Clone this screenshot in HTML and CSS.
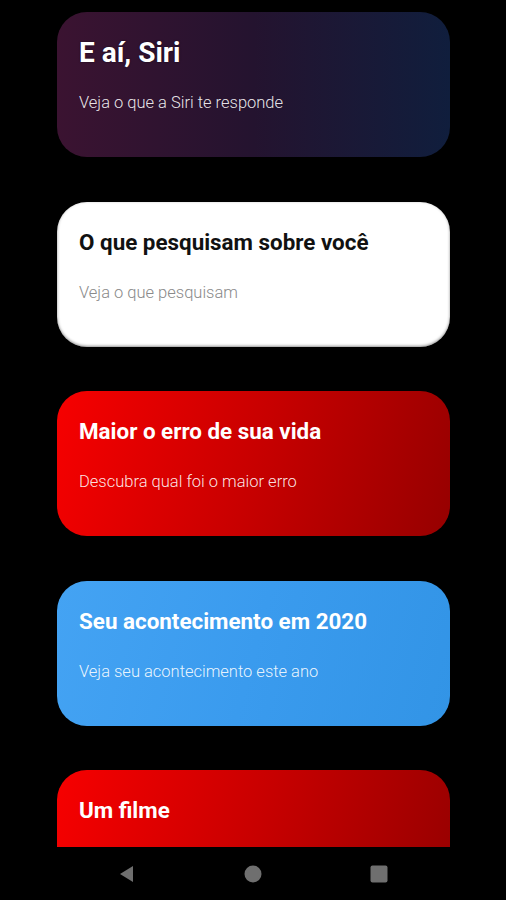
FILE: index.html
```html
<!DOCTYPE html>
<html lang="pt-BR">
<head>
  <meta charset="UTF-8">
  <meta name="viewport" content="width=device-width, initial-scale=1.0">
  <title>Perguntas</title>
  <link rel="stylesheet" href="styles.css">
</head>
<body>
  <!-- Card list -->
  <div class="card-list">
    <div class="card card-siri card-hero">
      <div class="card-title">E aí, Siri</div>
      <div class="card-text">Veja o que a Siri te responde</div>
    </div>

    <div class="card card-white">
      <div class="card-title">O que pesquisam sobre você</div>
      <div class="card-text">Veja o que pesquisam</div>
    </div>

    <div class="card card-red">
      <div class="card-title">Maior o erro de sua vida</div>
      <div class="card-text">Descubra qual foi o maior erro</div>
    </div>

    <div class="card card-blue">
      <div class="card-title">Seu acontecimento em 2020</div>
      <div class="card-text">Veja seu acontecimento este ano</div>
    </div>

    <div class="card card-red">
      <div class="card-title">Um filme</div>
      <div class="card-text">Descubra qual filme combina com você</div>
    </div>
  </div>

  <!-- Android navigation bar -->
  <div class="nav-bar">
    <svg class="nav-icon" viewBox="0 0 18 18"><path d="M15 1 L15 17 L2 9 Z" /></svg>
    <svg class="nav-icon" viewBox="0 0 18 18"><circle cx="9" cy="9" r="8.5" /></svg>
    <svg class="nav-icon" viewBox="0 0 18 18"><rect x="0.5" y="0.5" width="17" height="17" rx="2" /></svg>
  </div>
</body>
</html>
```

FILE: styles.css
```css
/* General body styling */
body {
  background-color: black;
  margin: 0;
  height: 900px;
  overflow: hidden;
  font-family: 'Roboto', 'Liberation Sans', sans-serif;
  color: white;
}

/* Card list */
.card-list {
  display: flex;
  flex-direction: column;
  gap: 44.5px;
  padding: 12px 0 0 57px;
  width: 393px;
}

.card {
  height: 145px;
  box-sizing: border-box;
  border-radius: 30px;
  padding: 27px 22px 44px;
  display: flex;
  flex-direction: column;
  justify-content: space-between;
}

.card-title {
  font-size: 22.4px;
  line-height: 26px;
  font-weight: bold;
}

.card-text {
  font-size: 16.5px;
  line-height: 20px;
  font-weight: 300;
  color: rgba(255, 255, 255, 0.9);
}

/* Big first card */
.card-hero {
  padding-top: 25px;
}

.card-hero .card-title {
  font-size: 28px;
  line-height: 32px;
  text-shadow: 0 0 2px rgba(0, 0, 0, 0.6);
}

.card-siri {
  background: linear-gradient(90deg, #3b1331 0%, #24132f 50%, #101e3d 100%);
}

.card-white {
  background-color: white;
  color: #111;
  box-shadow: inset 0 -1px 3px rgba(0, 0, 0, 0.45);
}

.card-white .card-text {
  color: #8a8a8a;
}

.card-red {
  background: linear-gradient(105deg, #f70000 0%, #c80000 50%, #960000 100%);
}

.card-blue {
  background: linear-gradient(105deg, #44a3f3 0%, #3a9bee 50%, #3294e6 100%);
}

/* Navigation bar */
.nav-bar {
  position: fixed;
  left: 0;
  bottom: 0;
  width: 100%;
  height: 53px;
  background-color: black;
  display: flex;
  justify-content: center;
  align-items: center;
  gap: 108px;
}

.nav-icon {
  width: 18px;
  height: 18px;
  fill: #6f6f6f;
}
```
